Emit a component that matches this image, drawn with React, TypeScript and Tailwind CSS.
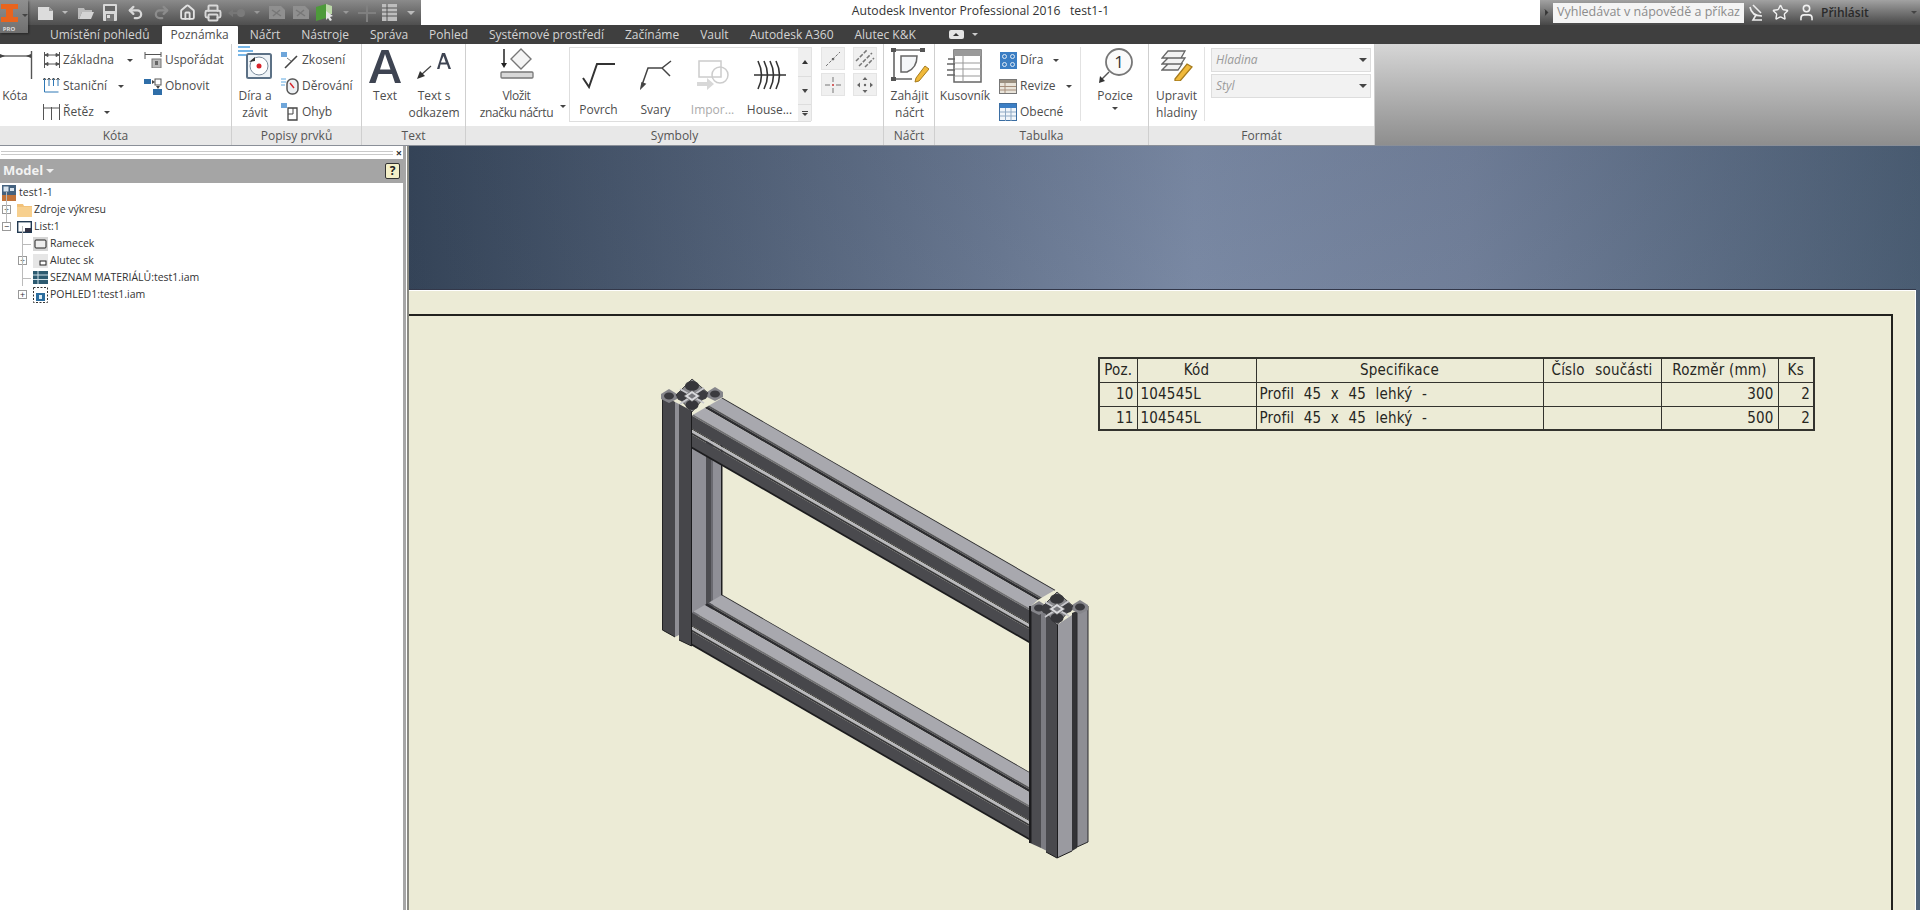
import React from "react";
import { Undo2, Redo2, House, Printer, Star, User, ChevronRight } from "lucide-react";

const Arrow = ({ className = "" }: { className?: string }) => (
  <span className={`inline-block h-0 w-0 border-x-[3px] border-t-[3px] border-x-transparent border-t-[#444] ${className}`} />
);

/* quick access icons */
const DocIco = () => (
  <svg width="17" height="16" viewBox="0 0 17 16"><path d="M1 2h11l4 4v9H1z" fill="#dcdcdc" /><path d="M12 2v4h4z" fill="#999" /></svg>
);
const FolderIco = () => (
  <svg width="18" height="14" viewBox="0 0 18 14"><path d="M1 2h6l1 2h7v2H5L2 13H1z" fill="#bbb" /><path d="M5 6h12l-3 7H2z" fill="#d4d4d4" /></svg>
);
const SaveIco = () => (
  <svg width="14" height="17" viewBox="0 0 14 17"><rect x="0" y="0" width="14" height="17" rx="1" fill="#d8d8d8" /><rect x="2" y="2" width="10" height="5" fill="#666" /><rect x="3" y="10" width="8" height="7" fill="#777" /><rect x="4" y="11" width="3" height="3" fill="#ddd" /></svg>
);
const BackIco = () => (
  <svg width="18" height="10" viewBox="0 0 18 10"><path d="M0 5l5-4v3h4v2H5v3z" fill="#777" /><circle cx="13" cy="5" r="4" fill="#7b7b7b" /></svg>
);
const ViewIco = () => (
  <svg width="18" height="15" viewBox="0 0 18 15"><path d="M1 1h12l4 4v9H1z" fill="#8f8f8f" /><path d="M4 5l9 6M12 5l-7 6" stroke="#777" strokeWidth="1.500" /></svg>
);
const GreenIco = () => (
  <svg width="20" height="19" viewBox="0 0 20 19"><path d="M1 4l10-3v14l-10 3z" fill="#4d9a3a" /><path d="M11 1l6 2v8h-6z" fill="#bcd9a8" /><path d="M11 8l7 5-3 1 2 3-2 1-2-3-2 2z" fill="#e5e5e5" /></svg>
);
const PlusIco = () => (
  <svg width="18" height="18" viewBox="0 0 18 18"><path d="M8 0h2v8h8v2h-8v8H8v-8H0V8h8z" fill="#808080" /></svg>
);
const QatTableIco = () => (
  <svg width="15" height="17" viewBox="0 0 15 17"><rect width="15" height="17" fill="#bdbdbd" /><path d="M0 4h15M0 8h15M0 12h15M5 0v17" stroke="#555" /></svg>
);

/* ribbon icons */
const DimLarge = () => (
  <svg width="34" height="32" viewBox="0 0 34 32" className="ml-[2px]"><path d="M32.500 1v28" stroke="#555" strokeWidth="1.400" /><path d="M0 6h32" stroke="#444" strokeWidth="1.200" /><path d="M1 4l5 2-5 2zM32 4l-5 2 5 2z" fill="#444" /></svg>
);
const ZakladnaIco = () => (
  <svg width="18" height="16" viewBox="0 0 18 16" fill="none" stroke="#555"><path d="M1.500 0v16M16.500 0v16M2 3h14M2 12h14" /><path d="M2 3l3-1.500v3zM16 3l-3-1.500v3zM2 12l3-1.500v3zM16 12l-3-1.500v3z" fill="#555" /></svg>
);
const StanicniIco = () => (
  <svg width="17" height="18" viewBox="0 0 17 18" fill="none"><path d="M1.500 1v14h14M6 1v8M10.500 1v8M15 1v8" stroke="#2f78b5" /><path d="M0 3l1.500-2L3 3M4.500 3L6 1l1.500 2M9 3l1.500-2L12 3M13.500 3L15 1l1.500 2" stroke="#444" /></svg>
);
const RetezIco = () => (
  <svg width="19" height="16" viewBox="0 0 19 16" fill="none" stroke="#555"><path d="M1.500 0v16M9.500 3v13M17.500 0v16" /><path d="M2 4h15" /></svg>
);
const UsporadatIco = () => (
  <svg width="18" height="16" viewBox="0 0 18 16" fill="none"><path d="M1 0v7M17 0v5M1 2.500h16" stroke="#555" /><rect x="8" y="7" width="9" height="9" fill="#bbb" stroke="#777" /><rect x="11" y="9" width="3" height="4" fill="#666" /></svg>
);
const ObnovitIco = () => (
  <svg width="18" height="17" viewBox="0 0 18 17"><rect x="0" y="1" width="7" height="5" fill="#2f6ea8" /><rect x="11" y="1" width="6" height="6" fill="none" stroke="#555" /><path d="M8 2l3 2-3 2zM12 8h4l-2 3z" fill="#444" /><rect x="9" y="11" width="9" height="6" fill="#2f6ea8" /></svg>
);
const DiraIco = () => (
  <svg width="34" height="40" viewBox="0 0 34 40" fill="none"><path d="M0 1h12M0 5h15M0 9h8" stroke="#4b9ee0" strokeWidth="1.600" /><rect x="9" y="8" width="24" height="24" rx="1.500" fill="#eef3f7" stroke="#5c7186" strokeWidth="2" /><circle cx="21" cy="20" r="9" fill="#fff" stroke="#7b8c9c" /><circle cx="21" cy="20" r="2.500" fill="#d8232a" /><path d="M11 16l6-5v4z" fill="#333" /></svg>
);
const ZkoseniIco = () => (
  <svg width="19" height="17" viewBox="0 0 19 17" fill="none"><rect x="0" y="0" width="6" height="5" fill="#6fa6da" /><path d="M4 16L16 4" stroke="#444" strokeWidth="1.600" /><path d="M6 6l4 3" stroke="#777" /></svg>
);
const DerovaniIco = () => (
  <svg width="19" height="18" viewBox="0 0 19 18" fill="none"><path d="M0 2h5M0 5h5M0 8h4" stroke="#5fa8e0" /><rect x="6" y="2" width="11" height="15" rx="5" fill="#eceff2" stroke="#555" strokeWidth="1.500" /><path d="M9 6l4 5" stroke="#d8232a" strokeWidth="1.400" /></svg>
);
const OhybIco = () => (
  <svg width="19" height="18" viewBox="0 0 19 18" fill="none"><rect x="0" y="0" width="6" height="5" fill="#6fa6da" /><path d="M7 5h9v12H7z" fill="#fff" stroke="#444" strokeWidth="1.300" /><path d="M7 11h5V5" stroke="#444" /></svg>
);
const BigA = () => (
  <svg width="32" height="34" viewBox="0 0 32 34"><path d="M12.500 1h7L32 34h-6l-3-9H9.500l-3 9H0zM11 20.500h10.500L16 5z" fill="#3e4452" /></svg>
);
const LeaderIco = () => (
  <svg width="34" height="28" viewBox="0 0 34 28"><path d="M25 1h3l6 16h-2.500l-1.500-4.500h-6.500L22.500 17H20zM23.800 10.500h5L26.500 4z" fill="#3e4452" /><path d="M14 14L4 23" stroke="#444" strokeWidth="1.200" fill="none" /><path d="M0 27l3-8 5 5z" fill="#333" /></svg>
);
const SketchSymIco = () => (
  <svg width="34" height="36" viewBox="0 0 34 36" fill="none"><path d="M4 1v16" stroke="#222" strokeWidth="1.500" /><path d="M1 15h6l-3 5z" fill="#222" /><path d="M21 1l10 10-10 10-10-10z" fill="#f4f4f4" stroke="#777" strokeWidth="1.400" /><rect x="1" y="24" width="32" height="6" rx="1" fill="#d8d8d8" stroke="#777" strokeWidth="1.300" /></svg>
);
const PovrchIco = () => (
  <svg width="34" height="28" viewBox="0 0 34 28" fill="none" stroke="#333" strokeWidth="2"><path d="M1 17l6 9L15 3h18" /></svg>
);
const SvaryIco = () => (
  <svg width="32" height="30" viewBox="0 0 32 30" fill="none" stroke="#444" strokeWidth="1.500"><path d="M2 25L8 8h14l9-7M22 8l8 8" /><path d="M1 28l1-5 3 1z" fill="#444" /></svg>
);
const ImporIco = () => (
  <svg width="34" height="30" viewBox="0 0 34 30" fill="none" stroke="#ccc" strokeWidth="1.500"><rect x="3" y="1" width="22" height="16" /><circle cx="24" cy="15" r="8" /><path d="M1 22h10v-4l7 6-7 6v-4H1z" fill="#d8d8d8" stroke="none" /></svg>
);
const HouseIco = () => (
  <svg width="32" height="30" viewBox="0 0 32 30" fill="none" stroke="#333" strokeWidth="1.600"><path d="M0 15h32M4 1q7 14 0 28M10 1q7 14 0 28M16 1q7 14 0 28M22 1q7 14 0 28" /></svg>
);
const MiniA = () => (
  <svg width="20" height="20" viewBox="0 0 20 20" fill="none" stroke="#777" strokeDasharray="3 1.500"><path d="M3 17L17 3" /><circle cx="10" cy="10" r="1" fill="#333" /></svg>
);
const MiniB = () => (
  <svg width="20" height="20" viewBox="0 0 20 20" fill="none" stroke="#777" strokeWidth="1.500" strokeDasharray="4 1.500"><path d="M1 12L12 1M4 17L17 4M10 18L19 9" /></svg>
);
const MiniC = () => (
  <svg width="20" height="20" viewBox="0 0 20 20" fill="none" stroke="#777"><path d="M10 2v5M10 13v5M2 10h5M13 10h5" /><circle cx="10" cy="10" r="1" fill="#c33" stroke="none" /></svg>
);
const MiniD = () => (
  <svg width="20" height="20" viewBox="0 0 20 20" fill="#666"><path d="M10 2l2.500 3h-5zM10 18l2.500-3h-5zM2 10l3-2.500v5zM18 10l-3-2.500v5z" /><circle cx="10" cy="10" r="1.200" /></svg>
);
const ZahajitIco = () => (
  <svg width="38" height="36" viewBox="0 0 38 36" fill="none"><path d="M3 2h28M3 2v29M3 31h18" stroke="#666" strokeWidth="1.600" /><path d="M10 8h16q0 12-10 16h-6z" stroke="#666" strokeWidth="1.500" fill="#f4f6f8" /><rect x="0" y="0" width="5" height="4" fill="#555" /><rect x="29" y="0" width="5" height="4" fill="#555" /><rect x="0" y="29" width="5" height="4" fill="#555" /><path d="M25 30l9-12 4 3-10 12-4 1z" fill="#f0b93a" stroke="#a67b1c" /></svg>
);
const KusovnikIco = () => (
  <svg width="36" height="34" viewBox="0 0 36 34" fill="none"><rect x="7" y="1" width="27" height="32" fill="#fff" stroke="#666" strokeWidth="1.500" /><rect x="7" y="1" width="27" height="6" fill="#9a9a9a" /><path d="M7 14h27M7 20h27M7 27h27M16 7v26" stroke="#999" /><path d="M1 10h7M0 15h8M0 21h8M0 26h8" stroke="#666" strokeWidth="1.500" /></svg>
);
const DiraTabIco = () => (
  <svg width="17" height="17" viewBox="0 0 17 17"><rect width="17" height="17" fill="#3b7ec4" /><g fill="none" stroke="#dfeaf5"><circle cx="4.500" cy="4.500" r="2" /><circle cx="12.500" cy="4.500" r="2" /><circle cx="4.500" cy="12.500" r="2" /><circle cx="12.500" cy="12.500" r="2" /></g></svg>
);
const RevizeIco = () => (
  <svg width="18" height="15" viewBox="0 0 18 15" fill="none"><rect x=".5" y=".5" width="17" height="14" fill="#e9e4da" stroke="#777" /><rect x="1" y="1" width="16" height="3" fill="#9a8f80" /><path d="M1 7.500h16M1 11h16M6 4v10" stroke="#a58d7a" /></svg>
);
const ObecneIco = () => (
  <svg width="18" height="18" viewBox="0 0 18 18" fill="none"><rect x=".5" y=".5" width="17" height="17" fill="#f0f5fa" stroke="#3b6ea3" /><rect x="1" y="1" width="16" height="4" fill="#3b7ec4" /><path d="M1 9h16M1 13h16M6.500 5v13M12 5v13" stroke="#8fa9c4" /></svg>
);
const PoziceIco = () => (
  <svg width="35" height="36" viewBox="0 0 35 36" fill="none"><circle cx="21" cy="14" r="13" fill="#fafafa" stroke="#777" strokeWidth="1.800" /><text x="21" y="20" textAnchor="middle" fontSize="17" fill="#333" fontFamily="'Open Sans', sans-serif">1</text><path d="M11 24l-7 7" stroke="#555" strokeWidth="1.400" /><path d="M1 35l1-7 5 5z" fill="#333" /></svg>
);
const HladinyIco = () => (
  <svg width="32" height="31" viewBox="0 0 32 31" fill="none" stroke="#666" strokeWidth="1.300"><path d="M7 1h17l-4 7H1zM7 8h17l-4 6H1zM7 14h14l-4 6H1z" fill="#f2f2f2" /><path d="M14 29l12-15 5 3-12 14-5 0z" fill="#f0b93a" stroke="#a67b1c" /></svg>
);

/* tree icons */
const TreeBox = ({ open }: { open: boolean }) => (
  <span className="flex h-[9px] w-[9px] items-center justify-center border border-[#999] bg-white text-[9px] leading-[7px] text-[#333]">
    {open ? "−" : "+"}
  </span>
);
const DrawingIco = () => (
  <svg width="14" height="16" viewBox="0 0 14 16"><rect width="14" height="16" fill="#44627f" /><rect x="1.500" y="1.500" width="5" height="5" fill="#d9e4ee" /><rect x="8" y="3" width="4" height="3" fill="#d9e4ee" /><rect x="0" y="10" width="14" height="6" fill="#c2743a" /></svg>
);
const TreeFolderIco = () => (
  <svg width="15" height="14" viewBox="0 0 15 14"><path d="M0 1h6l1 2h8v11H0z" fill="#f2c27a" /><path d="M0 4h15v10H0z" fill="#f7d08f" /></svg>
);
const SheetIco = () => (
  <svg width="15" height="12" viewBox="0 0 15 12"><rect x=".7" y=".7" width="13.600" height="10.600" fill="#fff" stroke="#223a52" strokeWidth="1.400" /><rect x="8" y="7" width="6" height="4" fill="#334" /></svg>
);
const FrameIco = () => (
  <svg width="15" height="14" viewBox="0 0 15 14"><rect width="15" height="14" fill="#d5d5d5" /><rect x="2" y="3" width="11" height="8" rx="1" fill="#eee" stroke="#222" /></svg>
);
const TitleIco = () => (
  <svg width="15" height="14" viewBox="0 0 15 14"><rect width="15" height="14" fill="#e6e6e6" /><rect x="7" y="7" width="6" height="4" fill="#fff" stroke="#222" /></svg>
);
const BomIco = () => (
  <svg width="15" height="13" viewBox="0 0 15 13"><rect width="15" height="13" fill="#2c5a70" /><path d="M0 4h15M0 8.500h15M5 0v13" stroke="#cfe0e8" /></svg>
);
const ViewTreeIco = () => (
  <svg width="15" height="16" viewBox="0 0 15 16" fill="none"><rect x=".5" y=".5" width="14" height="15" stroke="#333" strokeDasharray="2 1.500" /><rect x="3" y="6" width="9" height="8" fill="#2c6d9e" /><rect x="6" y="8" width="3" height="4" fill="#dcecf5" /></svg>
);

/* aluminium frame drawing helpers */
const SLOPE = 0.577;
const T = 1.154;
const railPts = (b: number, o1: number, o2: number, xr: number) => {
  const y = (x: number, o: number) => b + SLOPE * (x - 722) + o;
  const lx = (o: number) => Math.max(722 - o / T, 692);
  const rx = (o: number) => Math.max(xr - o / T, 1029);
  return [
    [lx(o1), y(lx(o1), o1)],
    [rx(o1), y(rx(o1), o1)],
    [rx(o2), y(rx(o2), o2)],
    [lx(o2), y(lx(o2), o2)],
  ]
    .map((p) => p.map((n) => n.toFixed(1)).join(","))
    .join(" ");
};

const Rail = ({ b, xr }: { b: number; xr: number }) => (
  <g>
    <polygon points={railPts(b, 0, 15, xr)} fill="#a8a8ae" />
    <polygon points={railPts(b, 15, 17, xr)} fill="#55555a" />
    <polygon points={railPts(b, 17, 20, xr)} fill="#2c2c30" />
    <polygon points={railPts(b, 20, 33, xr)} fill="#aaaab0" />
    <polygon points={railPts(b, 33, 35, xr)} fill="#6f6f74" />
    <polygon points={railPts(b, 35, 48, xr)} fill="#47474b" />
    <polygon points={railPts(b, 48, 49, xr)} fill="#222" />
    <polygon points={railPts(b, 49, 52, xr)} fill="#b9b9bd" />
    <polygon points={railPts(b, 52, 54, xr)} fill="#37373a" />
    <polygon points={railPts(b, 54, 67, xr)} fill="#4a4a4e" />
    <polygon points={railPts(b, 66, 68, xr)} fill="#1c1c1e" />
    <polygon points={railPts(b, -0.5, 0.5, xr)} fill="#2a2a2c" />
  </g>
);

const Cap = ({ cx, cy }: { cx: number; cy: number }) => (
  <g transform={`translate(${cx} ${cy})`}>
    <polygon points="0,-17 16,-3 0,16 -16,-1" fill="#8a8a8e" stroke="#2a2a2c" strokeWidth=".8" />
    <ellipse cx="0" cy="-10" rx="7" ry="5" fill="#36363a" />
    <ellipse cx="10" cy="-1" rx="5.500" ry="5" fill="#3c3c40" />
    <ellipse cx="-10" cy="0" rx="5.500" ry="5" fill="#3c3c40" />
    <ellipse cx="0" cy="9" rx="6.500" ry="5" fill="#36363a" />
    <path d="M-12-7L12 7M12-8L-12 8" stroke="#c8c8cc" strokeWidth="1.600" />
    <polygon points="0,-5.500 8,0 0,5.500 -8,0" fill="#dadadd" stroke="#555" strokeWidth=".6" />
    <polygon points="0,-2.800 4,0 0,2.800 -4,0" fill="#77777c" />
  </g>
);

const SmallCap = ({ cx, cy }: { cx: number; cy: number }) => (
  <g transform={`translate(${cx} ${cy})`}>
    <polygon points="0,-7 8,-2 8,3 0,7 -8,3 -8,-2" fill="#85858a" />
    <ellipse cx="0" cy="0" rx="5" ry="3.500" fill="#3a3a3e" />
  </g>
);

const AluFrame = () => (
  <svg width="445" height="500" viewBox="650 370 445 500" className="shrink-0">
    {/* inner vertical of the left post */}
    <polygon points="692,440 722,460 722,600 692,620" fill="#8f8f96" />
    <rect x="706" y="440" width="5" height="170" fill="#4c4c50" />
    <rect x="711" y="440" width="2" height="170" fill="#6a6a70" />
    <rect x="721" y="440" width="1.500" height="160" fill="#1e1e20" />
    <Rail b={398} xr={1055} />
    <Rail b={595} xr={1029} />
    {/* left posts */}
    <polygon points="662,394 675,402 675,637 662,630" fill="#47474b" />
    <path d="M662.500 394V630L675 637" stroke="#222" fill="none" />
    <polygon points="675,402 679,404 679,635 675,637" fill="#8f8f95" />
    <polygon points="679,404 692,411 692,646 679,640" fill="#46464a" />
    <path d="M679 640L691.500 646V411" stroke="#1a1a1c" fill="none" />
    {/* right posts */}
    <polygon points="1030,608 1041,612 1041,848 1030,843" fill="#4c4c50" />
    <rect x="1029" y="606" width="2.500" height="237" fill="#1c1c1e" />
    <polygon points="1041,612 1047,611 1047,851 1041,848" fill="#7c7c82" />
    <polygon points="1046,610 1057,625 1057,858 1046,852" fill="#49494d" />
    <polygon points="1057,625 1072,615 1072,851 1057,858" fill="#9a9aa0" />
    <path d="M1046 852L1057 858L1072 851M1057.500 625V858" stroke="#1c1c1e" fill="none" />
    <polygon points="1072,613 1077,611 1077,848 1072,851" fill="#333336" />
    <polygon points="1077,611 1088,606 1088,842 1077,847" fill="#8e8e94" />
    <path d="M1077 847L1088 842V606M1077 611V847" stroke="#2a2a2c" fill="none" />
    {/* profile caps */}
    <SmallCap cx={669} cy={396} />
    <SmallCap cx={715} cy={394} />
    <Cap cx={692} cy={396} />
    <SmallCap cx={1039} cy={608} />
    <SmallCap cx={1080} cy={607} />
    <Cap cx={1057} cy={609} />
  </svg>
);

/* ribbon building blocks */
const Panel = ({ w, title, children }: { w: string; title: string; children: React.ReactNode }) => (
  <div className={`flex shrink-0 flex-col border-r border-[#cfcfcf] ${w}`}>
    <div className="flex h-[82px] bg-white">{children}</div>
    <div className="flex h-[19px] items-center justify-center bg-[#e8e8e8] pt-[1px] text-[12px] text-[#555]">{title}</div>
  </div>
);

const Tall = ({ w, icon, lines, lineClass = "" }: { w: string; icon: React.ReactNode; lines: string[]; lineClass?: string }) => (
  <div className={`flex shrink-0 flex-col items-center ${w}`}>
    <div className="flex h-[43px] items-center justify-center">{icon}</div>
    {lines.map((l) => (
      <span key={l} className={`whitespace-nowrap leading-[17px] ${lineClass}`}>{l}</span>
    ))}
  </div>
);

const Row = ({ icon, label, w, arrow }: { icon: React.ReactNode; label: string; w: string; arrow?: string }) => (
  <div className="flex h-[26px] items-center">
    <span className={`flex shrink-0 items-center justify-center ${w}`}>{icon}</span>
    <span className="whitespace-nowrap">{label}</span>
    {arrow && <Arrow className={arrow} />}
  </div>
);

const Sep = ({ h = "h-[74px]" }: { h?: string }) => <div className={`mt-[3px] w-px shrink-0 bg-[#e2e2e2] ${h}`} />;

const GalleryItem = ({ icon, label, gray }: { icon: React.ReactNode; label: string; gray?: boolean }) => (
  <div className={`flex w-[57px] shrink-0 flex-col items-center ${gray ? "text-[#aaa]" : ""}`}>
    <div className="flex h-[50px] items-center justify-center pt-[4px]">{icon}</div>
    <span className="mt-[2px] whitespace-nowrap leading-[20px]">{label}</span>
  </div>
);

const MiniBtn = ({ children }: { children: React.ReactNode }) => (
  <div className="flex h-[23px] w-[24px] items-center justify-center border border-[#e4e4e4] bg-[#f0f0f0]">{children}</div>
);

const Combo = ({ label }: { label: string }) => (
  <div className="flex h-[24px] w-[160px] items-center justify-between border border-[#ddd] bg-[#f2f2f2] pl-[4px] pr-[3px] text-[12px] italic text-[#9a9a9a]">
    {label}
    <Arrow className="border-x-[4px] border-t-[4px] border-t-[#333]" />
  </div>
);

const TreeRow = ({ pad, box, icon, label }: { pad: string; box?: "open" | "closed"; icon: React.ReactNode; label: string }) => (
  <div className={`flex h-[17px] items-center ${pad}`}>
    {box && (
      <span className="mr-[5px] flex w-[9px] shrink-0">
        <TreeBox open={box === "open"} />
      </span>
    )}
    <span className="mr-[2px] flex w-[16px] shrink-0 items-center justify-center">{icon}</span>
    <span className="whitespace-nowrap">{label}</span>
  </div>
);

const cell = "border border-[#33332e] p-0";

export default function App() {
  return (
    <div className="relative flex h-[910px] w-[1920px] flex-col overflow-hidden bg-white font-['Open_Sans',sans-serif] text-[12px] text-[#4d4d4d]">
      {/* app button hangs over the tab row */}
      <div className="absolute left-0 top-0 z-10 flex h-[33px] w-[28px] bg-gradient-to-b from-[#8f8f8f] to-[#6f6f6f] shadow-[1px_1px_2px_#0006]">
        <div className="flex w-[18px] flex-col items-center">
          <svg width="17" height="20" viewBox="0 0 17 20" className="mt-[3px]">
            <path d="M0 1h17v5h-5v8h5v5H0v-5h5V6H0z" fill="#e8641e" />
          </svg>
          <span className="mt-[3px] text-[6px] font-bold leading-[7px] text-[#ddd]">PRO</span>
        </div>
        <Arrow className="ml-[4px] mt-[14px] border-t-[#333]" />
      </div>

      {/* title row */}
      <div className="flex h-[25px] shrink-0">
        <div className="flex w-[421px] shrink-0 items-center bg-gradient-to-b from-[#8b8b8b] to-[#4f4f4f] pl-[36px]">
          <span className="flex w-[19px] justify-center"><DocIco /></span>
          <span className="flex w-[19px] justify-center"><Arrow className="border-t-[#bbb]" /></span>
          <span className="flex w-[23px] justify-center"><FolderIco /></span>
          <span className="flex w-[25px] justify-center"><SaveIco /></span>
          <span className="flex w-[26px] justify-center"><Undo2 size={17} strokeWidth={3.2} color="#d8d8d8" /></span>
          <span className="flex w-[26px] justify-center"><Redo2 size={17} strokeWidth={3.2} color="#8c8c8c" /></span>
          <span className="flex w-[26px] justify-center"><House size={17} strokeWidth={2.6} color="#e2e2e2" /></span>
          <span className="flex w-[26px] justify-center"><Printer size={18} strokeWidth={2.6} color="#d8d8d8" /></span>
          <span className="flex w-[22px] justify-center"><BackIco /></span>
          <span className="flex w-[18px] justify-center"><Arrow className="border-t-[#999]" /></span>
          <span className="flex w-[21px] justify-center"><ViewIco /></span>
          <span className="flex w-[27px] justify-center"><ViewIco /></span>
          <span className="flex w-[22px] justify-center"><GreenIco /></span>
          <span className="flex w-[19px] justify-center"><Arrow className="border-t-[#999]" /></span>
          <span className="flex w-[23px] justify-center"><PlusIco /></span>
          <span className="flex w-[23px] justify-center"><QatTableIco /></span>
          <span className="flex w-[20px] justify-center"><Arrow className="border-x-[4px] border-t-[4px] border-t-[#bbb]" /></span>
        </div>
        <div className="flex flex-1 items-center justify-center pb-[2px] text-[12.2px] text-[#333]">
          <span className="whitespace-pre">Autodesk Inventor Professional 2016   test1-1</span>
        </div>
        <div className="flex w-[380px] shrink-0 items-center bg-gradient-to-b from-[#a2a2a2] to-[#484848]">
          <ChevronRight size={11} fill="#333" color="#333" className="ml-[1px]" />
          <div className="ml-[1px] flex h-[20px] w-[191px] items-center overflow-hidden whitespace-nowrap bg-[#f4f4f4] pl-[4px] text-[12.5px] text-[#8c8c8c]">
            Vyhledávat v nápovědě a příkaz
          </div>
          <svg width="16" height="17" viewBox="0 0 16 17" className="ml-[4px]" fill="none" stroke="#eee" strokeWidth="1.600"><path d="M2 3c1 6 5 9 12 9M5 1l8 8M8 11l-3 5h9" /></svg>
          <Star size={17} strokeWidth={2} color="#f0f0f0" className="ml-[8px]" />
          <User size={19} strokeWidth={2} color="#f0f0f0" className="ml-[8px]" />
          <span className="ml-[5px] text-[12px] font-semibold text-[#2a2a2a]">Přihlásit</span>
          <Arrow className="ml-auto mr-[3px]" />
        </div>
      </div>

      {/* tabs */}
      <div className="flex h-[19px] shrink-0 items-center gap-[21px] bg-[#3f3f3f] pl-[50px] text-[12px] text-[#d4d4d4]">
        <span>Umístění pohledů</span>
        <span className="-mx-[9px] mb-0 mt-[1px] flex h-[18px] items-center rounded-t-[1px] bg-white px-[9px] text-[#4d4d4d]">Poznámka</span>
        <span>Náčrt</span>
        <span>Nástroje</span>
        <span>Správa</span>
        <span>Pohled</span>
        <span>Systémové prostředí</span>
        <span>Začínáme</span>
        <span>Vault</span>
        <span>Autodesk A360</span>
        <span>Alutec K&amp;K</span>
        <span className="ml-[12px] flex items-center gap-[8px]">
          <span className="flex h-[9px] w-[15px] items-center justify-center rounded-[2px] bg-[#e4e4e4]">
            <span className="h-0 w-0 border-x-[3px] border-b-[3px] border-x-transparent border-b-[#333]" />
          </span>
          <Arrow className="border-t-[#ccc]" />
        </span>
      </div>

      {/* ribbon */}
      <div className="flex h-[102px] shrink-0 border-b border-[#8a8f98] bg-gradient-to-b from-[#d6d6d6] to-[#8e8e8e]">
        <Panel w="w-[232px]" title="Kóta">
          <div className="w-[30px] shrink-0">
            <Tall w="w-[30px]" icon={<DimLarge />} lines={["Kóta"]} />
          </div>
          <div className="ml-[10px] w-[101px] shrink-0 pt-[3px]">
            <Row w="w-[23px]" icon={<ZakladnaIco />} label="Základna" arrow="ml-[13px]" />
            <Row w="w-[23px]" icon={<StanicniIco />} label="Staniční" arrow="ml-[11px]" />
            <Row w="w-[23px]" icon={<RetezIco />} label="Řetěz" arrow="ml-[10px]" />
          </div>
          <div className="shrink-0 pt-[3px]">
            <Row w="w-[24px]" icon={<UsporadatIco />} label="Uspořádat" />
            <Row w="w-[24px]" icon={<ObnovitIco />} label="Obnovit" />
          </div>
        </Panel>
        <Panel w="w-[130px]" title="Popisy prvků">
          <Tall w="w-[46px]" icon={<DiraIco />} lines={["Díra a", "závit"]} />
          <div className="ml-[1px] shrink-0 pt-[3px]">
            <Row w="w-[23px]" icon={<ZkoseniIco />} label="Zkosení" />
            <Row w="w-[23px]" icon={<DerovaniIco />} label="Děrování" />
            <Row w="w-[23px]" icon={<OhybIco />} label="Ohyb" />
          </div>
        </Panel>
        <Panel w="w-[104px]" title="Text">
          <Tall w="w-[46px]" icon={<BigA />} lines={["Text"]} />
          <Tall w="w-[52px]" icon={<LeaderIco />} lines={["Text s", "odkazem"]} />
        </Panel>
        <Panel w="w-[418px]" title="Symboly">
          <div className="relative w-[103px] shrink-0">
            <Tall w="w-[101px]" icon={<SketchSymIco />} lines={["Vložit", "značku náčrtu"]} lineClass="tracking-[-0.4px]" />
            <Arrow className="absolute bottom-[18px] right-[3px]" />
          </div>
          <div className="mt-[3px] flex h-[75px] w-[242px] shrink-0 border border-[#dedede]">
            <GalleryItem icon={<PovrchIco />} label="Povrch" />
            <GalleryItem icon={<SvaryIco />} label="Svary" />
            <GalleryItem icon={<ImporIco />} label="Impor..." gray />
            <GalleryItem icon={<HouseIco />} label="House..." />
            <div className="ml-auto flex w-[14px] shrink-0 flex-col bg-[#efefef] text-center">
              <span className="flex h-[29px] items-center justify-center border-b border-[#ddd]">
                <span className="h-0 w-0 border-x-[3px] border-b-[4px] border-x-transparent border-b-[#333]" />
              </span>
              <span className="flex h-[28px] items-center justify-center border-b border-[#ddd]">
                <Arrow className="border-t-[4px] border-t-[#333]" />
              </span>
              <span className="flex flex-1 flex-col items-center justify-center gap-[1px]">
                <span className="h-px w-[6px] bg-[#444]" />
                <Arrow />
              </span>
            </div>
          </div>
          <Sep />
          <div className="ml-[9px] mt-[3px] grid h-[49px] grid-cols-[24px_24px] gap-x-[8px] gap-y-[3px]">
            <MiniBtn><MiniA /></MiniBtn>
            <MiniBtn><MiniB /></MiniBtn>
            <MiniBtn><MiniC /></MiniBtn>
            <MiniBtn><MiniD /></MiniBtn>
          </div>
        </Panel>
        <Panel w="w-[51px]" title="Náčrt">
          <Tall w="w-[51px]" icon={<ZahajitIco />} lines={["Zahájit", "náčrt"]} />
        </Panel>
        <Panel w="w-[214px]" title="Tabulka">
          <Tall w="w-[60px]" icon={<KusovnikIco />} lines={["Kusovník"]} />
          <div className="ml-[1px] w-[84px] shrink-0 pt-[3px]">
            <Row w="w-[24px]" icon={<DiraTabIco />} label="Díra" arrow="ml-[10px]" />
            <Row w="w-[24px]" icon={<RevizeIco />} label="Revize" arrow="ml-[10px]" />
            <Row w="w-[24px]" icon={<ObecneIco />} label="Obecné" />
          </div>
          <Sep />
          <div className="flex w-[68px] shrink-0 flex-col items-center">
            <div className="flex h-[43px] items-center justify-center">
              <PoziceIco />
            </div>
            <span className="leading-[17px]">Pozice</span>
            <Arrow className="mt-[3px]" />
          </div>
        </Panel>
        <Panel w="w-[226px]" title="Formát">
          <Tall w="w-[55px]" icon={<HladinyIco />} lines={["Upravit", "hladiny"]} />
          <Sep />
          <div className="ml-[6px] mt-[4px] flex flex-col gap-[2px]">
            <Combo label="Hladina" />
            <Combo label="Styl" />
          </div>
        </Panel>
      </div>

      {/* workspace */}
      <div className="flex min-h-0 flex-1">
        {/* browser */}
        <div className="flex w-[406px] shrink-0 flex-col border-r-[3px] border-[#a6a6a6] bg-white">
          <div className="flex h-[13px] shrink-0 items-center gap-[3px] pl-[1px] pr-[1px]">
            <div className="h-[4px] flex-1 border-y border-[#c9c9c9]" />
            <span className="text-[11px] font-bold leading-none text-[#333]">×</span>
          </div>
          <div className="flex h-[24px] shrink-0 items-center bg-[#a5a5a5] pl-[3px] pr-[3px]">
            <span className="text-[13px] font-bold text-[#f2f2f2]">Model</span>
            <Arrow className="ml-[3px] border-x-[4px] border-t-[4px] border-t-[#eee]" />
            <span className="ml-auto flex h-[16px] w-[15px] items-center justify-center rounded-[2px] border border-[#333] bg-[#f4f0c8] text-[12px] font-bold leading-none text-[#222]">?</span>
          </div>
          <div className="relative pt-[1px] text-[10.5px] text-[#333]">
            <TreeRow pad="pl-[1px]" icon={<DrawingIco />} label="test1-1" />
            <TreeRow pad="pl-[2px]" box="closed" icon={<TreeFolderIco />} label="Zdroje výkresu" />
            <TreeRow pad="pl-[2px]" box="open" icon={<SheetIco />} label="List:1" />
            <TreeRow pad="pl-[32px]" icon={<FrameIco />} label="Ramecek" />
            <TreeRow pad="pl-[18px]" box="closed" icon={<TitleIco />} label="Alutec sk" />
            <TreeRow pad="pl-[32px]" icon={<BomIco />} label="SEZNAM MATERIÁLŮ:test1.iam" />
            <TreeRow pad="pl-[18px]" box="closed" icon={<ViewTreeIco />} label="POHLED1:test1.iam" />
            {/* tree guide lines */}
            <div className="absolute left-[6px] top-[9px] h-[30px] w-px bg-[#bbb]" />
            <div className="absolute left-[22px] top-[43px] h-[60px] w-px bg-[#bbb]" />
            <div className="absolute left-[22px] top-[61px] h-px w-[9px] bg-[#bbb]" />
            <div className="absolute left-[22px] top-[95px] h-px w-[9px] bg-[#bbb]" />
          </div>
        </div>

        {/* drawing area */}
        <div className="ml-[1px] flex min-w-0 flex-1 flex-col border-l-2 border-[#8a8a82] bg-[linear-gradient(to_bottom,rgba(45,55,75,0.2),rgba(45,55,75,0)_90%),linear-gradient(to_right,#36465a,#8898b4_52%,#7d8ca7_70%,#4f6379)] pr-[4px] pt-[144px]">
          <div className="flex flex-1 flex-col border-r border-t border-white bg-[#ecebd6] pr-[22px] pt-[23px] shadow-[0_-1px_0_#33384a]">
            <div className="flex flex-1 items-start border-r-2 border-t-2 border-[#22221e] pl-[241px]">
              <div className="mt-[54px]">
                <AluFrame />
              </div>
              <table className="ml-[3px] mt-[41px] w-[715px] table-fixed border-collapse border-2 border-[#33332e] font-['DejaVu_Sans_Condensed','DejaVu_Sans',sans-serif] text-[15px] leading-[18px] tracking-[0.2px] text-[#26261f] [font-stretch:condensed]">
                <colgroup>
                  <col className="w-[38px]" />
                  <col className="w-[119px]" />
                  <col className="w-[287px]" />
                  <col className="w-[118px]" />
                  <col className="w-[117px]" />
                  <col className="w-[36px]" />
                </colgroup>
                <thead>
                  <tr className="h-[24px] text-center">
                    <th className={`${cell} font-normal`}>Poz.</th>
                    <th className={`${cell} font-normal`}>Kód</th>
                    <th className={`${cell} font-normal`}>Specifikace</th>
                    <th className={`${cell} whitespace-nowrap font-normal [word-spacing:6px]`}>Číslo součásti</th>
                    <th className={`${cell} font-normal`}>Rozměr (mm)</th>
                    <th className={`${cell} font-normal`}>Ks</th>
                  </tr>
                </thead>
                <tbody>
                  <tr className="h-[24px]">
                    <td className={`${cell} pr-[3px] text-right`}>10</td>
                    <td className={`${cell} pl-[3px]`}>104545L</td>
                    <td className={`${cell} pl-[3px] [word-spacing:5px]`}>Profil 45 x 45 lehký -</td>
                    <td className={cell} />
                    <td className={`${cell} pr-[4px] text-right`}>300</td>
                    <td className={`${cell} pr-[3px] text-right`}>2</td>
                  </tr>
                  <tr className="h-[24px]">
                    <td className={`${cell} pr-[3px] text-right`}>11</td>
                    <td className={`${cell} pl-[3px]`}>104545L</td>
                    <td className={`${cell} pl-[3px] [word-spacing:5px]`}>Profil 45 x 45 lehký -</td>
                    <td className={cell} />
                    <td className={`${cell} pr-[4px] text-right`}>500</td>
                    <td className={`${cell} pr-[3px] text-right`}>2</td>
                  </tr>
                </tbody>
              </table>
            </div>
          </div>
        </div>
      </div>
    </div>
  );
}
